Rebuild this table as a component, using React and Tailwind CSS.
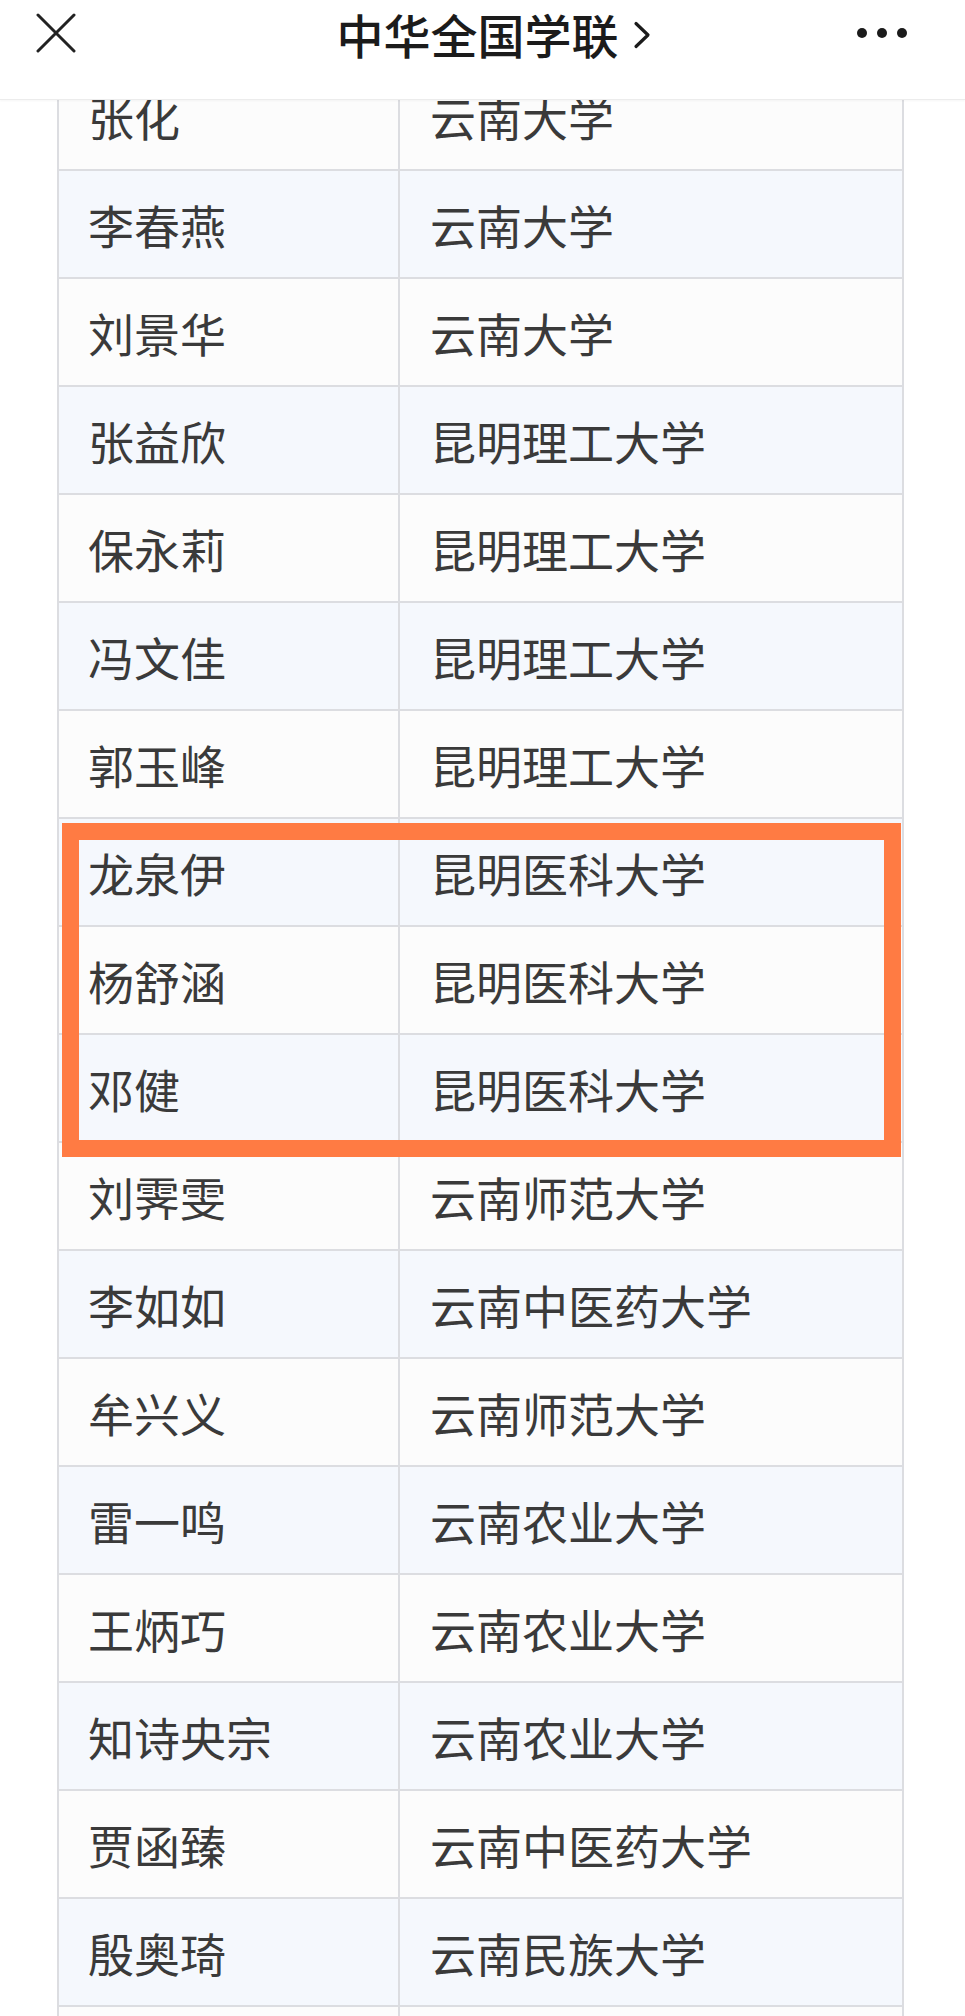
const ROWS = [
  ["张化", "云南大学"],
  ["李春燕", "云南大学"],
  ["刘景华", "云南大学"],
  ["张益欣", "昆明理工大学"],
  ["保永莉", "昆明理工大学"],
  ["冯文佳", "昆明理工大学"],
  ["郭玉峰", "昆明理工大学"],
  ["龙泉伊", "昆明医科大学"],
  ["杨舒涵", "昆明医科大学"],
  ["邓健", "昆明医科大学"],
  ["刘霁雯", "云南师范大学"],
  ["李如如", "云南中医药大学"],
  ["牟兴义", "云南师范大学"],
  ["雷一鸣", "云南农业大学"],
  ["王炳巧", "云南农业大学"],
  ["知诗央宗", "云南农业大学"],
  ["贾函臻", "云南中医药大学"],
  ["殷奥琦", "云南民族大学"],
  ["", ""],
];

const font = { fontFamily: '"Noto Sans CJK SC", "Noto Sans", sans-serif' };

const App = () => {
  return (
    <div className="relative h-[2016px] overflow-hidden bg-white" style={font}>
      {/* top bar, sits over the scrolled table */}
      <div className="absolute inset-x-0 top-0 z-20 h-[100px] bg-white border-b border-[#ececec] shadow-[0_1px_2px_rgba(0,0,0,0.04)]">
        <div className="relative flex h-[66px] items-center justify-center">
          <button className="absolute left-[36px] top-[13px] text-[#222]">
            <svg width="40" height="40" viewBox="0 0 40 40" fill="none" stroke="currentColor" strokeWidth="3" strokeLinecap="round">
              <path d="M2 2 L38 38 M38 2 L2 38" />
            </svg>
          </button>
          <div className="flex items-center pl-[22px]">
            <span className="text-[47px] leading-none font-medium text-[#1b1b1b]">中华全国学联</span>
            <svg className="ml-[14px] mt-[3px]" width="18" height="28" viewBox="0 0 18 28" fill="none" stroke="#1b1b1b" strokeWidth="3.2" strokeLinecap="round" strokeLinejoin="round">
              <path d="M3 2.5 L15 14 L3 25.5" />
            </svg>
          </div>
          <div className="absolute right-[58px] top-[28px] flex gap-[10px]">
            <span className="h-[10px] w-[10px] rounded-full bg-[#1b1b1b]" />
            <span className="h-[10px] w-[10px] rounded-full bg-[#1b1b1b]" />
            <span className="h-[10px] w-[10px] rounded-full bg-[#1b1b1b]" />
          </div>
        </div>
      </div>

      <div className="pt-[63px] pl-[57px]">
        <div className="w-[847px] border-x-2 border-[#dcdde1]">
          {ROWS.map((r, i) => (
            <div
              key={i}
              className={`grid h-[108px] grid-cols-[341px_1fr] border-b-2 border-[#dcdde1] ${i % 2 === 1 ? "bg-[#f5f8fd]" : "bg-[#fcfcfc]"}`}
            >
              <div className="flex items-center border-r-2 border-[#dcdde1] pl-[29px] text-[46px] leading-none text-[#3a3a3a]">
                {r[0]}
              </div>
              <div className="flex items-center pl-[30px] text-[46px] leading-none text-[#3a3a3a]">
                {r[1]}
              </div>
            </div>
          ))}
        </div>
      </div>

      {/* highlight mark drawn over the three rows */}
      <div className="absolute left-[62px] top-[823px] z-10 h-[334px] w-[839px] border-[17px] border-[#ff7b43]" />
    </div>
  );
};

export default App;
